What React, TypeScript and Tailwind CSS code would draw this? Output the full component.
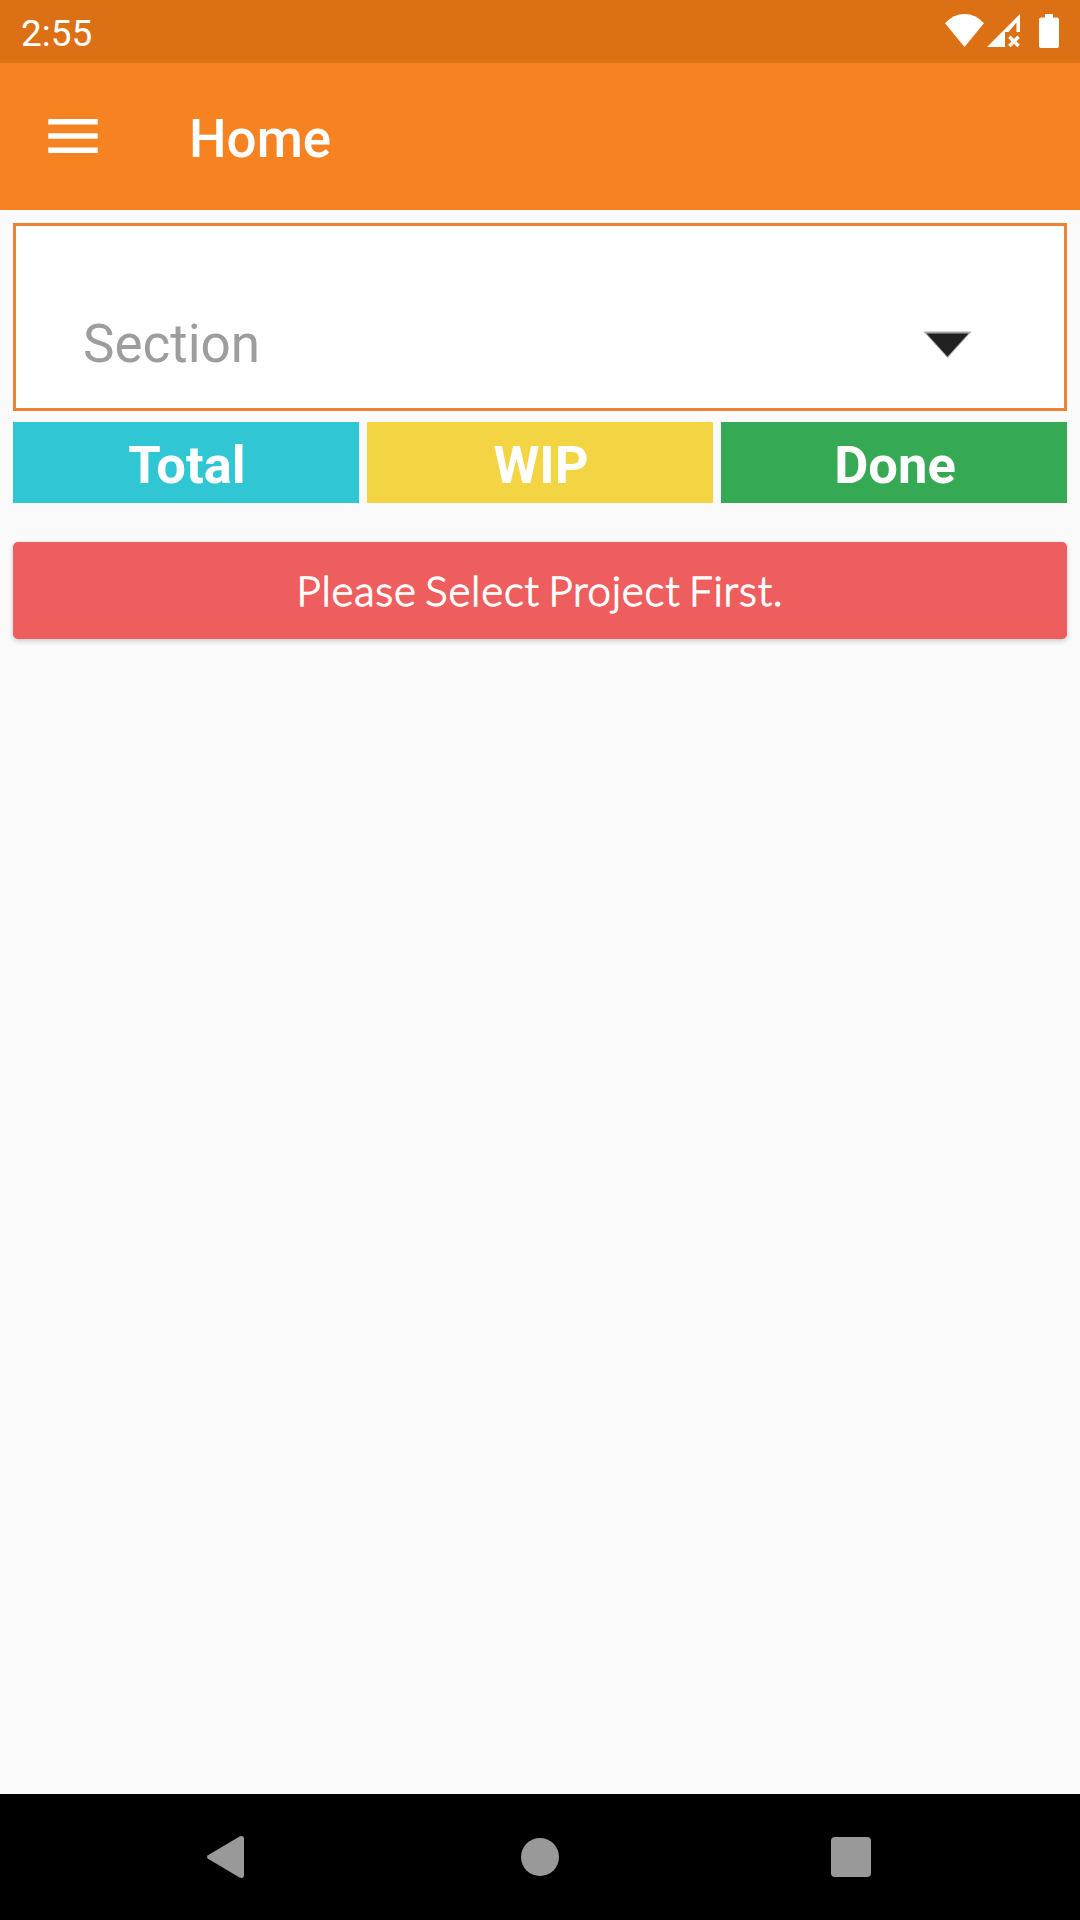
import React from "react";

const tiles = [
  { title: "Total", color: "bg-[#30c6d3]" },
  { title: "WIP", color: "bg-[#f3d443]" },
  { title: "Done", color: "bg-[#36a954]" },
];

const StatusBar = () => {
  return (
    <div className="flex h-[63px] items-center bg-[#db7015] pr-[21px] pb-px pl-[21px] text-white">
      <div className="flex-1 pt-[5px] text-[37px] leading-none">2:55</div>
      <svg className="h-[34px] w-[40px]" viewBox="0 0 40 34" fill="currentColor">
        <path d="M0 9.200Q8.500 0 19.500 0T39 9.200L19.500 33Z" />
      </svg>
      <svg
        className="ml-[2px] h-[34px] w-[34px]"
        viewBox="0 0 34 34"
        fill="currentColor"
      >
        <path d="M0 33L33 0V18H29.500V8.500L21.500 18H18V33Z" />
        <path
          d="M22.400 22.800L31.600 32M31.600 22.800L22.400 32"
          stroke="currentColor"
          strokeWidth="3.400"
        />
      </svg>
      <svg
        className="ml-[18px] h-[34px] w-[20px]"
        viewBox="0 0 20 34"
        fill="currentColor"
      >
        <path d="M6 0H14V3.500H18Q20 3.500 20 5.500V32Q20 34 18 34H2Q0 34 0 32V5.500Q0 3.500 2 3.500H6Z" />
      </svg>
    </div>
  );
};

const Header = () => {
  return (
    <div className="flex h-[147px] items-center bg-[#f68222] pl-[48px] text-white">
      <button className="w-[141px]" aria-label="Menu">
        <svg className="h-[36px] w-[50px]" viewBox="0 0 50 36" fill="currentColor">
          <path d="M0.300 0H49.700V5.500H0.300ZM0.300 14.200H49.700V19.700H0.300ZM0.300 28.400H49.700V33.900H0.300Z" />
        </svg>
      </button>
      <h1 className="pt-[5px] text-[53px] font-medium leading-none">Home</h1>
    </div>
  );
};

const SectionSelect = () => {
  return (
    <div className="flex h-[188px] items-center justify-between border-[3px] border-[#ea8434] bg-white pt-[55px] pr-[92px] pl-[67px]">
      <span className="text-[53px] leading-none text-[#9d9d9d]">Section</span>
      <svg className="h-[27px] w-[49px]" viewBox="0 0 49 27">
        <path d="M0.500 0.500H48.500L24.500 27Z" fill="#a5a5a5" />
        <path d="M3.500 2.500H45.500L24.500 25.500Z" fill="#212121" />
      </svg>
    </div>
  );
};

const NavBar = () => {
  return (
    <div className="flex h-[126px] items-center bg-black pl-[206px] text-[#999999]">
      <svg className="h-[44px] w-[38px]" viewBox="0 0 38 44" fill="currentColor">
        <path d="M2 20.200L33.500 1.400Q38 -0.200 38 4V40Q38 44.200 33.500 42.600L2 23.800Q0 22 2 20.200Z" />
      </svg>
      <div className="ml-[277px] h-[38px] w-[38px] rounded-full bg-[#999999]" />
      <div className="ml-[272px] h-[40px] w-[40px] rounded-[4px] bg-[#999999]" />
    </div>
  );
};

const App = () => {
  return (
    <div className="flex h-[1920px] w-[1080px] flex-col bg-[#fafafa] font-['Roboto',sans-serif]">
      <StatusBar />
      <Header />
      <div className="flex flex-1 flex-col px-[13px] pt-[13px]">
        <SectionSelect />
        <div className="mt-[11px] grid grid-cols-3 gap-2">
          {tiles.map((tile) => (
            <div
              key={tile.title}
              className={`flex h-[81px] items-center justify-center pt-[5px] pl-[2px] text-[52.500px] font-bold leading-none text-white ${tile.color}`}
            >
              {tile.title}
            </div>
          ))}
        </div>
        <div className="mt-[39px] flex h-[97px] items-center justify-center rounded-[5px] bg-[#ee5e5e] pb-[2px] font-['Lato',sans-serif] text-[42px] font-light leading-none tracking-[0.8px] text-white shadow-[0_2px_5px_rgba(0,0,0,0.2)] [word-spacing:-3.5px] [-webkit-text-stroke:1.3px_white]">
          Please Select Project First.
        </div>
      </div>
      <NavBar />
    </div>
  );
};

export default App;
